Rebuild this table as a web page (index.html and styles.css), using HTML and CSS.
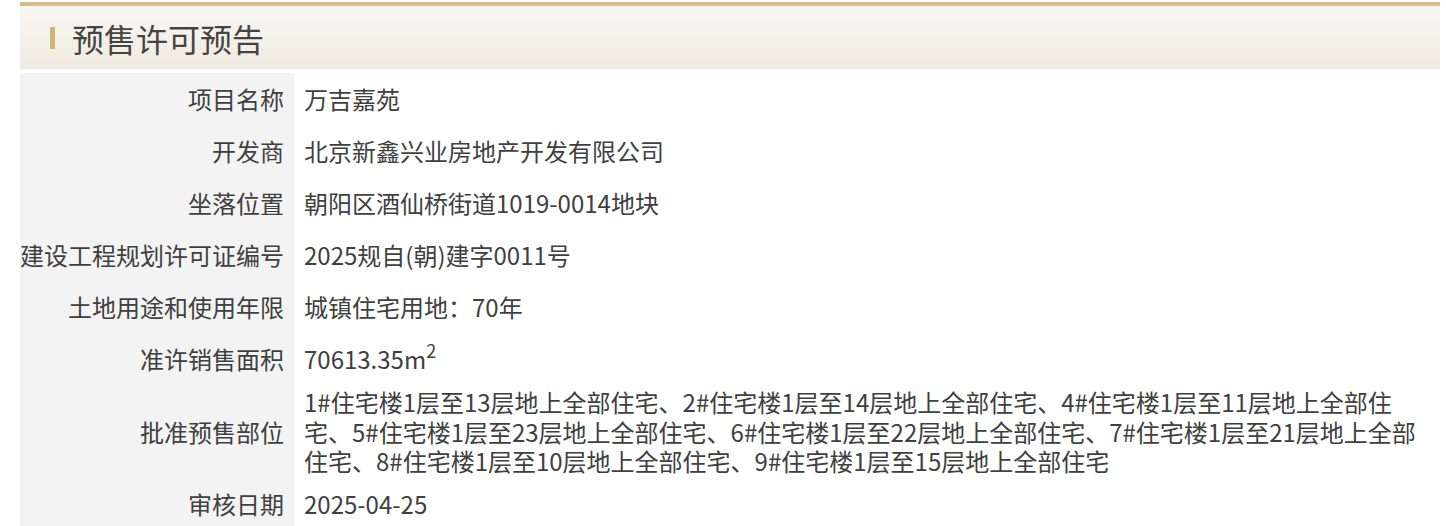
FILE: index.html
```html
<!DOCTYPE html>
<html lang="zh-CN">
<head>
    <meta charset="UTF-8">
    <title>预售许可预告</title>
    <link rel="stylesheet" href="styles.css">
</head>
<body>
    <!-- 预售许可预告 박스 -->
    <div class="wrap">
        <!-- 1. 제목부분 -->
        <h2 class="tit"><span class="bar"></span>预售许可预告</h2>

        <!-- 2. 정보 테이블 -->
        <table class="info">
            <tr>
                <th>项目名称</th>
                <td>万吉嘉苑</td>
            </tr>
            <tr>
                <th>开发商</th>
                <td>北京新鑫兴业房地产开发有限公司</td>
            </tr>
            <tr>
                <th>坐落位置</th>
                <td>朝阳区酒仙桥街道1019-0014地块</td>
            </tr>
            <tr>
                <th>建设工程规划许可证编号</th>
                <td>2025规自(朝)建字0011号</td>
            </tr>
            <tr>
                <th>土地用途和使用年限</th>
                <td>城镇住宅用地：70年</td>
            </tr>
            <tr>
                <th>准许销售面积</th>
                <td>70613.35m<sup>2</sup></td>
            </tr>
            <tr>
                <th>批准预售部位</th>
                <td>1#住宅楼1层至13层地上全部住宅、2#住宅楼1层至14层地上全部住宅、4#住宅楼1层至11层地上全部住宅、5#住宅楼1层至23层地上全部住宅、6#住宅楼1层至22层地上全部住宅、7#住宅楼1层至21层地上全部住宅、8#住宅楼1层至10层地上全部住宅、9#住宅楼1层至15层地上全部住宅</td>
            </tr>
            <tr>
                <th>审核日期</th>
                <td>2025-04-25</td>
            </tr>
        </table>
    </div>
</body>
</html>
```
FILE: styles.css
```css
html,
body {
    margin: 0;
    padding: 0;
    background: #fff;
}

body {
    font-family: "Noto Sans CJK SC", "Noto Sans", sans-serif;
    color: #404040;
}

/* 전체 박스 */
.wrap {
    width: 1420px;
    margin: 0 0 0 20px;
    padding-top: 2px;
}

/* 1. 제목 */
.tit {
    display: flex;
    align-items: center;
    height: 64px;
    margin: 0;
    padding-left: 30px;
    font-size: 32px;
    font-weight: normal;
    color: #444;
    border-top: 4px solid #d5bd88;
    background: linear-gradient(to bottom, #f9f7f2 0%, #f5f2ea 45%, #eeeadf 96%, #f6f4ee 100%);
}

/* 제목 앞 금색 막대 */
.tit .bar {
    display: block;
    width: 5px;
    height: 22px;
    margin-right: 17px;
    background: #d2b479;
}

/* 2. 정보 테이블 */
.info {
    width: 100%;
    margin-top: 3px;
    border-collapse: collapse;
    font-size: 24px;
    line-height: 29.5px;
}

.info tr {
    height: 52px;
}

.info th {
    width: 264px;
    padding: 2px 10px 2px 0;
    text-align: right;
    font-weight: normal;
    white-space: nowrap;
    vertical-align: middle;
    background: #f3f3f3;
}

.info td {
    padding: 2px 8px 2px 10px;
    text-align: left;
    vertical-align: middle;
    background: #fff;
}

/* 제곱미터 윗첨자 */
.info sup {
    font-size: 18px;
    line-height: 0;
    vertical-align: 11px;
}
```
